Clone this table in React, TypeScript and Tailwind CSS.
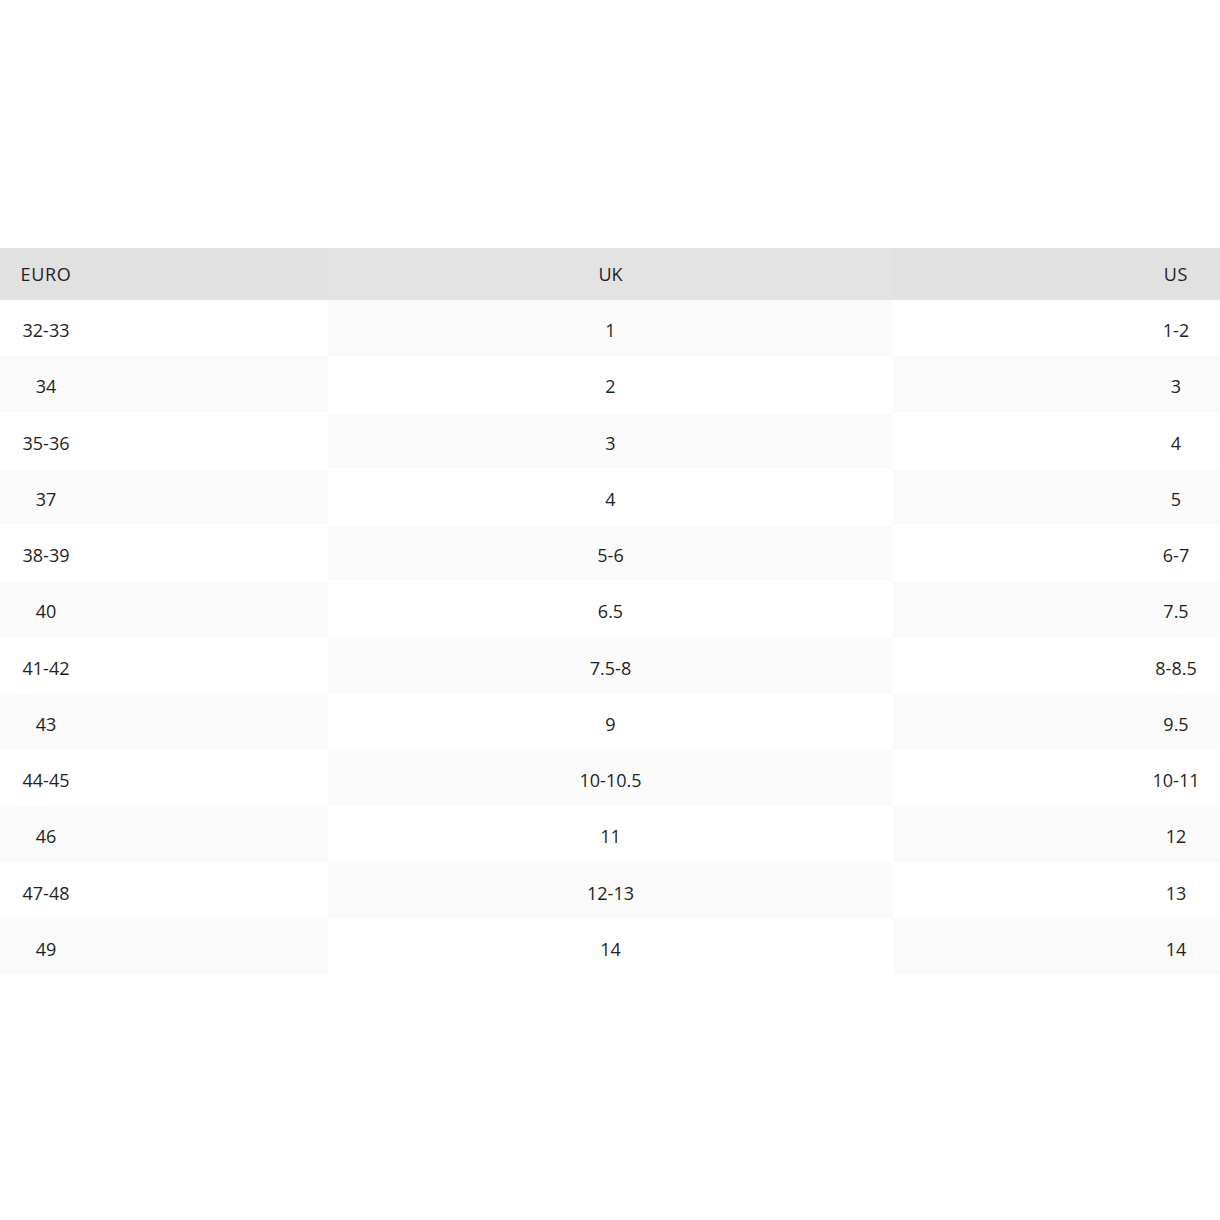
import React from "react";

const rows: [string, string, string][] = [
  ["32-33", "1", "1-2"],
  ["34", "2", "3"],
  ["35-36", "3", "4"],
  ["37", "4", "5"],
  ["38-39", "5-6", "6-7"],
  ["40", "6.5", "7.5"],
  ["41-42", "7.5-8", "8-8.5"],
  ["43", "9", "9.5"],
  ["44-45", "10-10.5", "10-11"],
  ["46", "11", "12"],
  ["47-48", "12-13", "13"],
  ["49", "14", "14"],
];

const App = () => {
  return (
    <div
      className="w-[1220px] h-[1220px] bg-white text-[#1f1f1f] text-[18px]"
      style={{ fontFamily: '"Open Sans", "Noto Sans", sans-serif' }}
    >
      <div className="pt-[248px]">
        {/* header */}
        <div className="flex h-[52px]">
          <div className="w-[328px] bg-[#e1e1e1] flex items-center">
            <span className="w-[92px] text-center tracking-[0.04em]">EURO</span>
          </div>
          <div className="w-[565px] bg-[#e3e3e3] flex items-center justify-center">
            UK
          </div>
          <div className="flex-1 bg-[#e1e1e1] flex items-center justify-end">
            <span className="w-[88px] text-center tracking-[0.04em]">US</span>
          </div>
        </div>

        {rows.map(([euro, uk, us], i) => {
          const odd = i % 2 === 0;
          return (
            <div key={euro} className="flex h-[56.25px]">
              <div
                className={`w-[328px] pt-[5px] flex items-center ${
                  odd ? "bg-white" : "bg-[#fafafa]"
                }`}
              >
                <span className="w-[92px] text-center">{euro}</span>
              </div>
              <div
                className={`w-[565px] pt-[5px] flex items-center justify-center ${
                  odd ? "bg-[#fafafa]" : "bg-white"
                }`}
              >
                {uk}
              </div>
              <div
                className={`flex-1 pt-[5px] flex items-center justify-end ${
                  odd ? "bg-white" : "bg-[#fafafa]"
                }`}
              >
                <span className="w-[88px] text-center">{us}</span>
              </div>
            </div>
          );
        })}
      </div>
    </div>
  );
};

export default App;
